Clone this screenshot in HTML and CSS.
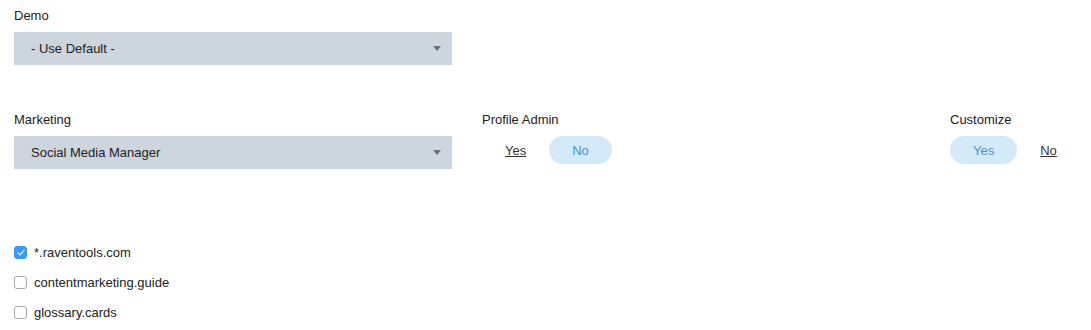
FILE: index.html
```html
<!DOCTYPE html>
<html lang="en">
<head>
    <meta charset="UTF-8">
    <meta name="viewport" content="width=device-width, initial-scale=1.0">
    <title>User Permissions</title>
    <link rel="stylesheet" href="styles.css">
</head>
<body>
    <div class="permissions">
        <div class="row">
            <div class="field">
                <label class="field-label" for="demo">Demo</label>
                <div class="select">
                    <select id="demo">
                        <option>- Use Default -</option>
                    </select>
                </div>
            </div>
        </div>

        <div class="row">
            <div class="field">
                <label class="field-label" for="marketing">Marketing</label>
                <div class="select">
                    <select id="marketing">
                        <option>Social Media Manager</option>
                    </select>
                </div>
            </div>
            <div class="field">
                <span class="field-label">Profile Admin</span>
                <div class="toggle">
                    <button class="toggle-option">Yes</button>
                    <button class="toggle-option active">No</button>
                </div>
            </div>
            <div class="field">
                <span class="field-label">Customize</span>
                <div class="toggle">
                    <button class="toggle-option active">Yes</button>
                    <button class="toggle-option">No</button>
                </div>
            </div>
        </div>

        <ul class="domains">
            <li><label><input type="checkbox" checked> *.raventools.com</label></li>
            <li><label><input type="checkbox"> contentmarketing.guide</label></li>
            <li><label><input type="checkbox"> glossary.cards</label></li>
        </ul>
    </div>
</body>
</html>
```

FILE: styles.css
```css
body {
    margin: 0;
    font-family: "Liberation Sans", Arial, sans-serif;
    font-size: 13px;
    color: #222;
    background: #fff;
}
.permissions {
    padding: 8px 0 0 14px;
}
.row {
    display: grid;
    grid-template-columns: 438px 438px 1fr;
    column-gap: 30px;
    margin-bottom: 47px;
}
.field-label {
    display: block;
    height: 16px;
    line-height: 16px;
    margin-bottom: 8px;
}
.select {
    position: relative;
}
.select select {
    appearance: none;
    -webkit-appearance: none;
    width: 100%;
    height: 33px;
    border: 0;
    border-radius: 0;
    background: #cdd5df;
    padding: 0 30px 0 17px;
    font-family: inherit;
    font-size: 13px;
    color: #222;
    outline: none;
}
.select::after {
    content: "";
    position: absolute;
    right: 11px;
    top: 14px;
    border-left: 4.5px solid transparent;
    border-right: 4.5px solid transparent;
    border-top: 5px solid #707070;
    pointer-events: none;
}
.toggle {
    display: flex;
}
.toggle-option {
    height: 28px;
    padding: 0 23px;
    border: 0;
    border-radius: 14px;
    background: none;
    font-family: inherit;
    font-size: 13px;
    color: #333;
    text-decoration: underline;
    cursor: pointer;
}
.toggle-option.active {
    background: #d4eaf9;
    color: #4a90e2;
    text-decoration: none;
}
.domains {
    list-style: none;
    margin: 68px 0 0;
    padding: 0;
}
.domains li {
    height: 30px;
    display: flex;
    align-items: center;
}
.domains label {
    display: flex;
    align-items: center;
}
.domains input {
    appearance: none;
    -webkit-appearance: none;
    width: 13px;
    height: 13px;
    margin: 0 7px 0 0;
    border: 1px solid #a8a8a8;
    border-radius: 3px;
    background: #fff;
    position: relative;
}
.domains input:checked {
    background: #3b99fc;
    border-color: #3b99fc;
}
.domains input:checked::after {
    content: "";
    position: absolute;
    left: 3.5px;
    top: 1px;
    width: 3px;
    height: 6px;
    border-right: 1.5px solid #fff;
    border-bottom: 1.5px solid #fff;
    transform: rotate(40deg);
}
```
